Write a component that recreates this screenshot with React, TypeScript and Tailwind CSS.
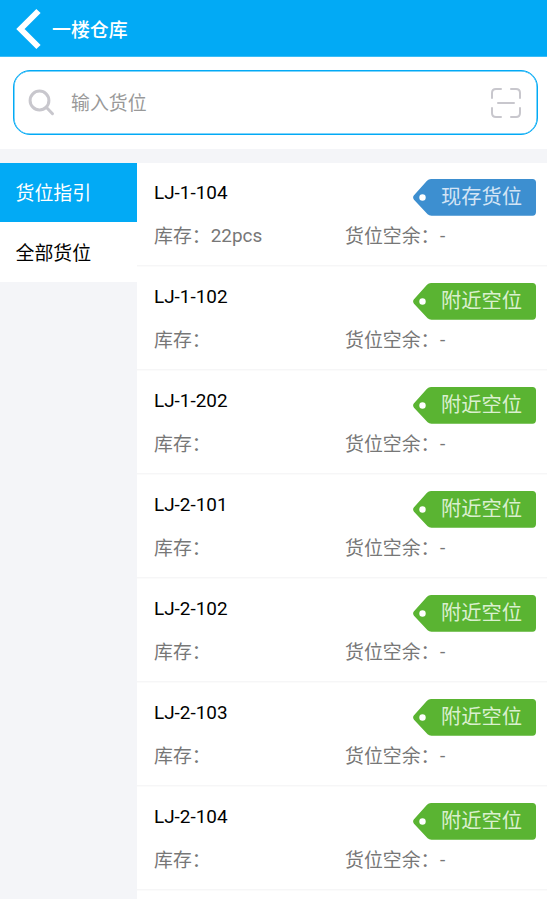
type Slot = { code: string; stock: string; current?: boolean };

const slots: Slot[] = [
  { code: 'LJ-1-104', stock: '22pcs', current: true },
  { code: 'LJ-1-102', stock: '' },
  { code: 'LJ-1-202', stock: '' },
  { code: 'LJ-2-101', stock: '' },
  { code: 'LJ-2-102', stock: '' },
  { code: 'LJ-2-103', stock: '' },
  { code: 'LJ-2-104', stock: '' },
];

function Tag({ current }: { current?: boolean }) {
  return (
    <div className="relative h-[37px] w-[123px]">
      <svg className="absolute inset-0" width="123" height="37" viewBox="0 0 123 37">
        <path
          d="M18 0H119.500Q123 0 123 3.500V33Q123 36.700 119.500 36.700H18.500Q16 36.700 14.600 35.300L1 20.700Q-0.800 18.500 1 16.300L14 1.800Q15.600 0 18 0Z"
          fill={current ? '#3d8fd0' : '#5ab432'}
        />
        <circle cx="9.500" cy="18.500" r="3.200" fill="#fff" />
      </svg>
      <span
        className={`relative block pl-[28px] pt-[3px] text-[20.300px] leading-[30px] font-normal ${
          current ? 'text-[#d3e4f5]' : 'text-[#daf0cf]'
        }`}
      >
        {current ? '现存货位' : '附近空位'}
      </span>
    </div>
  );
}

function SlotRow({ slot }: { slot: Slot }) {
  return (
    <div className="h-[104px] pl-[17px] pr-[11px] pt-4 shadow-[inset_0_-1px_0_#fbfbfb,inset_0_-2px_0_#f6f6f7]">
      <div className="flex h-[37px] items-start justify-between">
        <span className="text-[18.900px] leading-[28px] text-black">{slot.code}</span>
        <Tag current={slot.current} />
      </div>
      <div className="mt-[7px] flex text-[18.900px] leading-[28px] text-[#777]">
        <span className="w-[191px]">
          库存：<span className="inline-block -translate-y-px">{slot.stock}</span>
        </span>
        <span>
          货位空余：<span className="ml-[0.500px] inline-block -translate-y-px">-</span>
        </span>
      </div>
    </div>
  );
}

export default function App() {
  return (
    <div className="flex h-[899px] w-[547px] flex-col overflow-hidden bg-[#f4f5f8] font-[Roboto,'Noto_Sans_CJK_SC',sans-serif]">
      <header className="flex h-[57px] shrink-0 items-center border-b border-[#3bbdf7] bg-[#02aaf5]">
        <svg className="ml-[15px] mt-[2px]" width="28" height="42" viewBox="0 0 28 42" fill="none">
          <path d="M23.500 3L5.500 21L23.500 39" stroke="#fff" strokeWidth="6" />
        </svg>
        <h1 className="ml-[9px] mt-[6px] text-[18.900px] leading-[28px] font-medium text-white">一楼仓库</h1>
      </header>

      <div className="h-[92px] shrink-0 bg-white pl-[13px] pr-[9px] pt-[13px]">
        <div className="flex h-[65px] items-center rounded-[17px] border border-[#02aaf5] bg-white pl-[14px] pr-4 shadow-[inset_0_0_0_0.500px_#02aaf5]">
          <svg width="28" height="28" viewBox="0 0 28 28" fill="none" stroke="#c8c7cd" strokeWidth="3">
            <circle cx="11.500" cy="11.500" r="9.400" />
            <path d="M18.500 18.500L24.500 24.700" strokeLinecap="round" />
          </svg>
          <span className="ml-[15px] mt-[2px] grow text-[18.900px] leading-[28px] text-[#999]">输入货位</span>
          <svg width="30" height="30" viewBox="0 0 30 30" fill="none" stroke="#c8c7cd" strokeWidth="2" strokeLinecap="round">
            <path d="M1 10V5Q1 1 5 1H10M20 1H25Q29 1 29 5V10M29 20V25Q29 29 25 29H20M10 29H5Q1 29 1 25V20M7 15H23" />
          </svg>
        </div>
      </div>

      <div className="mt-[14px] flex min-h-0 grow">
        <nav className="w-[137px] shrink-0 text-[18.900px] leading-[28px]">
          <div className="flex h-[59px] items-center bg-[#02aaf5] pl-[15.500px] pt-[2px] text-white">货位指引</div>
          <div className="flex h-[60px] items-center bg-white pl-[15.500px] pt-[3px] text-black">全部货位</div>
        </nav>
        <main className="min-w-0 grow overflow-hidden bg-white">
          {slots.map((slot) => (
            <SlotRow key={slot.code} slot={slot} />
          ))}
          <div className="h-4" />
        </main>
      </div>
    </div>
  );
}
